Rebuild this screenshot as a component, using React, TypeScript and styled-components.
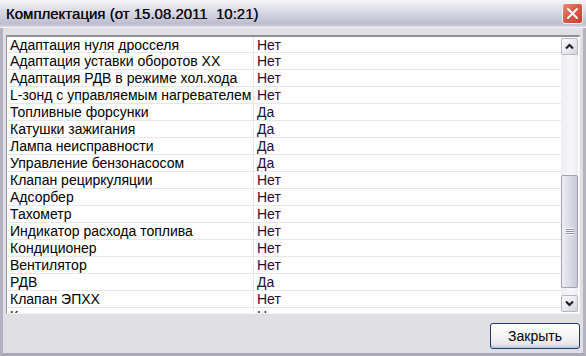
import React from 'react'
import styled, { createGlobalStyle } from 'styled-components'

const GlobalStyle = createGlobalStyle`
    html, body {
        margin: 0;
        padding: 0;
        background: #e0dfe3;
    }
`

interface Item {
    name: string
    value: string
}

const items: Item[] = [
    { name: 'Адаптация нуля дросселя', value: 'Нет' },
    { name: 'Адаптация уставки оборотов ХХ', value: 'Нет' },
    { name: 'Адаптация РДВ в режиме хол.хода', value: 'Нет' },
    { name: 'L-зонд с управляемым нагревателем', value: 'Нет' },
    { name: 'Топливные форсунки', value: 'Да' },
    { name: 'Катушки зажигания', value: 'Да' },
    { name: 'Лампа неисправности', value: 'Да' },
    { name: 'Управление бензонасосом', value: 'Да' },
    { name: 'Клапан рециркуляции', value: 'Нет' },
    { name: 'Адсорбер', value: 'Нет' },
    { name: 'Тахометр', value: 'Нет' },
    { name: 'Индикатор расхода топлива', value: 'Нет' },
    { name: 'Кондиционер', value: 'Нет' },
    { name: 'Вентилятор', value: 'Нет' },
    { name: 'РДВ', value: 'Да' },
    { name: 'Клапан ЭПХХ', value: 'Нет' },
    { name: 'Катализатор', value: 'Нет' },
]

const Window = styled.div`
    width: 586px;
    height: 356px;
    box-sizing: border-box;
    display: flex;
    flex-direction: column;
    background: #e0dfe3;
    border-left: 3px solid #b4b3bd;
    border-right: 3px solid #b4b3bd;
    border-bottom: 3px solid #a9a8b4;
    font-family: "Liberation Sans", Arial, sans-serif;
`

const TitleBar = styled.div`
    height: 27px;
    margin: 0 -3px;
    flex-shrink: 0;
    display: flex;
    align-items: center;
    justify-content: space-between;
    padding: 0 3px 0 6px;
    background: linear-gradient(#f6f6f9 0%, #e4e4ec 25%, #cfcfdc 60%, #bdbdcf 88%, #d8d8e2 100%);
    border-bottom: 1px solid #f2f2f6;
`

const Title = styled.span`
    font-size: 15px;
    color: #0c0c14;
    white-space: pre;
    text-shadow: 0 0 0.3px #0c0c14;
`

const CloseButton = styled.div`
    width: 21px;
    height: 21px;
    box-sizing: border-box;
    border: 1px solid #f4f4f4;
    border-radius: 3px;
    background: linear-gradient(135deg, #ec8c7c 0%, #d85c48 45%, #c4402e 100%);
    display: flex;
    align-items: center;
    justify-content: center;
`

const Body = styled.div`
    flex: 1;
    display: flex;
    flex-direction: column;
    padding: 7px 3px 4px 3px;
    gap: 9px;
`

const ListBox = styled.div`
    height: 276px;
    display: flex;
    background: #fff;
    border-top: 2px solid #8f8f97;
    border-left: 1px solid #8f8f97;
    border-right: 1px solid #f4f4f6;
    border-bottom: 1px solid #f4f4f6;
    padding: 0 1px 0 1px;
`

const Rows = styled.div`
    flex: 1;
    overflow: hidden;
`

const Row = styled.div`
    display: grid;
    grid-template-columns: 246px 1fr;
    height: 17px;
    border-bottom: 1px solid #e6e6e6;
    box-sizing: border-box;
    font-size: 14px;
    line-height: 16px;
    &:first-child {
        height: 16px;
    }
`

const NameCell = styled.div`
    padding-left: 2px;
    color: #000;
    white-space: nowrap;
    border-right: 1px solid #e6e6e6;
`

const ValueCell = styled.div`
    padding-left: 3px;
    color: #2a0a3c;
`

const ScrollBar = styled.div`
    width: 17px;
    display: flex;
    flex-direction: column;
    background: linear-gradient(90deg, #eeeef3 0%, #f7f7f9 60%, #ecebf0 100%);
    margin: 1px 0 1px 0;
`

const ArrowButton = styled.div`
    height: 17px;
    box-sizing: border-box;
    border: 1px solid #b7b7c4;
    border-radius: 2px;
    background: linear-gradient(135deg, #fdfdfe 0%, #e6e6ee 60%, #d3d3df 100%);
    display: flex;
    align-items: center;
    justify-content: center;
`

const Track = styled.div`
    flex: 1;
    display: flex;
    flex-direction: column;
`

const Thumb = styled.div`
    box-sizing: border-box;
    border: 1px solid #a1a1b3;
    border-radius: 2px;
    background: linear-gradient(90deg, #eeeef5 0%, #dcdce8 50%, #c8c8d8 100%);
    display: flex;
    align-items: center;
    justify-content: center;
`

const Grip = styled.div`
    width: 8px;
    height: 7px;
    background: repeating-linear-gradient(#f8f8fc 0 1px, #8e8ea6 1px 2px);
`

const Footer = styled.div`
    display: flex;
    justify-content: flex-end;
`

const Button = styled.button`
    width: 90px;
    height: 26px;
    border: 1px solid #1c3c70;
    border-radius: 3px;
    background: linear-gradient(#ffffff 0%, #f3f3f6 60%, #dcdce4 100%);
    box-shadow: inset 0 -2px 0 #c6cde0, inset 0 1px 0 #fff;
    font-family: "Liberation Sans", Arial, sans-serif;
    font-size: 14px;
    color: #000;
    padding: 0;
`

const Chevron = ({ up }: { up?: boolean }) => (
    <svg width="9" height="7" viewBox="0 0 9 7">
        <path d={up ? 'M1 5.5 L4.5 2 L8 5.5' : 'M1 1.5 L4.5 5 L8 1.5'} fill="none" stroke="#1a1a22" strokeWidth="2" />
    </svg>
)

export default function App() {
    const thumbTop = 120
    const thumbHeight = 113

    return (
        <>
            <GlobalStyle />
            <Window>
                <TitleBar>
                    <Title>Комплектация (от 15.08.2011  10:21)</Title>
                    <CloseButton>
                        <svg width="13" height="13" viewBox="0 0 13 13">
                            <path d="M2 2 L11 11 M11 2 L2 11" stroke="#fff" strokeWidth="2" strokeLinecap="round" />
                        </svg>
                    </CloseButton>
                </TitleBar>
                <Body>
                    <ListBox>
                        <Rows>
                            {items.map(item => (
                                <Row key={item.name}>
                                    <NameCell>{item.name}</NameCell>
                                    <ValueCell>{item.value}</ValueCell>
                                </Row>
                            ))}
                        </Rows>
                        <ScrollBar>
                            <ArrowButton><Chevron up /></ArrowButton>
                            <Track>
                                <Thumb style={{ marginTop: thumbTop, height: thumbHeight }}>
                                    <Grip />
                                </Thumb>
                            </Track>
                            <ArrowButton><Chevron /></ArrowButton>
                        </ScrollBar>
                    </ListBox>
                    <Footer>
                        <Button>Закрыть</Button>
                    </Footer>
                </Body>
            </Window>
        </>
    )
}
